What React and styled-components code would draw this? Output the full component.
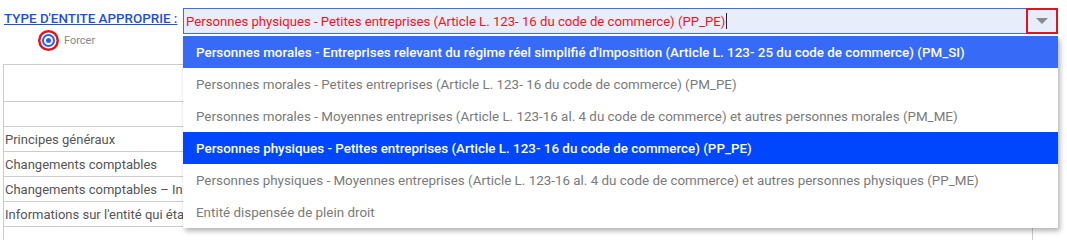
import { useState } from 'react';
import styled, { createGlobalStyle } from 'styled-components';

const options = [
  { code: 'PM_SI', label: "Personnes morales - Entreprises relevant du régime réel simplifié d'imposition (Article L. 123- 25 du code de commerce) (PM_SI)" },
  { code: 'PM_PE', label: 'Personnes morales - Petites entreprises (Article L. 123- 16 du code de commerce) (PM_PE)' },
  { code: 'PM_ME', label: 'Personnes morales - Moyennes entreprises (Article L. 123-16 al. 4 du code de commerce) et autres personnes morales (PM_ME)' },
  { code: 'PP_PE', label: 'Personnes physiques - Petites entreprises (Article L. 123- 16 du code de commerce) (PP_PE)' },
  { code: 'PP_ME', label: 'Personnes physiques - Moyennes entreprises (Article L. 123-16 al. 4 du code de commerce) et autres personnes physiques (PP_ME)' },
  { code: 'DISP', label: 'Entité dispensée de plein droit' },
];

const rows = [
  { label: '', tall: true },
  { label: '' },
  { label: 'Principes généraux' },
  { label: 'Changements comptables' },
  { label: 'Changements comptables – Informations' },
  { label: "Informations sur l'entité qui établit les comptes" },
  { label: '' },
];

const App = () => {
  const [selected, setSelected] = useState('PP_PE');
  const [hover, setHover] = useState('PM_SI');
  const current = options.find((o) => o.code === selected);

  return (
    <Page>
      <GlobalStyle />
      <Header>
        <LabelCol>
          <Label>TYPE D'ENTITE APPROPRIE :</Label>
          <Force>
            <Radio />
            <span>Forcer</span>
          </Force>
        </LabelCol>
        <SelectWrap>
          <SelectBox>
            <SelectText>
              {current.label}
              <Caret />
            </SelectText>
            <ArrowButton>
              <svg width="12" height="7" viewBox="0 0 12 7">
                <path d="M0 0 L12 0 L6 6 Z" fill="#8a8a8a" />
              </svg>
            </ArrowButton>
          </SelectBox>
          <Menu>
            {options.map((o) => (
              <Item
                key={o.code}
                $selected={o.code === selected}
                $hover={o.code === hover && o.code !== selected}
                onMouseEnter={() => setHover(o.code)}
                onClick={() => setSelected(o.code)}
              >
                {o.label}
              </Item>
            ))}
          </Menu>
        </SelectWrap>
      </Header>
      <Table>
        <tbody>
          {rows.map((r, i) => (
            <Row key={i} $tall={r.tall}>
              <Cell>{r.label}</Cell>
            </Row>
          ))}
        </tbody>
      </Table>
    </Page>
  );
};

const GlobalStyle = createGlobalStyle`
  body {
    margin: 0;
    background: #fff;
    font-family: Roboto, "Liberation Sans", sans-serif;
  }
`;

const Page = styled.div`
  padding: 8px 0 0 3px;
  width: 1067px;
  box-sizing: border-box;
`;

const Header = styled.div`
  display: flex;
  align-items: flex-start;
  gap: 8px;
  position: relative;
  z-index: 2;
  height: 56px;
`;

const LabelCol = styled.div`
  width: 172px;
  display: flex;
  flex-direction: column;
  padding-top: 3px;
`;

const Label = styled.a`
  color: #1d4fe0;
  font-size: 13.4px;
  font-weight: 500;
  text-decoration: underline;
  padding-left: 1px;
  white-space: nowrap;
  cursor: pointer;
`;

const Force = styled.label`
  display: flex;
  align-items: center;
  gap: 9px;
  margin: 8px 0 0 39px;
  color: #888;
  font-size: 11px;
`;

const Radio = styled.span`
  width: 9px;
  height: 9px;
  border-radius: 50%;
  background: #fff;
  border: 2px solid #2a5ff0;
  box-shadow: 0 0 0 1.5px #fff, 0 0 0 4px #e3141c;
  position: relative;

  &::after {
    content: '';
    position: absolute;
    width: 5px;
    height: 5px;
    border-radius: 50%;
    background: #2a5ff0;
    left: 2px;
    top: 2px;
  }
`;

const SelectWrap = styled.div`
  width: 875px;
  position: relative;
`;

const SelectBox = styled.div`
  display: flex;
  align-items: stretch;
  height: 26px;
  box-sizing: border-box;
  border: 1px solid #3a6af2;
  background: #e8edfb;
`;

const SelectText = styled.div`
  flex: 1;
  display: flex;
  align-items: center;
  padding-left: 2px;
  color: #f0141c;
  font-size: 13.15px;
  white-space: nowrap;
`;

const Caret = styled.span`
  display: inline-block;
  width: 1px;
  height: 16px;
  background: #222;
  margin-left: 1px;
`;

const ArrowButton = styled.div`
  width: 32px;
  margin: -1px -1px -1px 0;
  border: 2px solid #e3141c;
  box-sizing: border-box;
  display: flex;
  align-items: center;
  justify-content: center;
`;

const Menu = styled.div`
  position: absolute;
  top: 28px;
  left: 0;
  width: 875px;
  background: #fff;
  box-shadow: 2px 3px 5px rgba(0, 0, 0, 0.3);
`;

const Item = styled.div`
  height: 32px;
  display: flex;
  align-items: center;
  padding-left: 13px;
  font-size: 13.4px;
  white-space: nowrap;
  cursor: pointer;
  color: ${(p) => (p.$selected || p.$hover ? '#fff' : '#7a7a7a')};
  font-weight: ${(p) => (p.$selected || p.$hover ? 500 : 400)};
  background: ${(p) => (p.$selected ? '#0046fc' : p.$hover ? '#376af7' : '#fff')};
`;

const Table = styled.table`
  border-collapse: collapse;
  width: 1030px;
`;

const Row = styled.tr`
  height: ${(p) => (p.$tall ? '37px' : '25px')};
`;

const Cell = styled.td`
  border: 1px solid #cccccc;
  padding: 0 1px;
  font-size: 13px;
  color: #555;
  white-space: nowrap;
`;

export default App;
